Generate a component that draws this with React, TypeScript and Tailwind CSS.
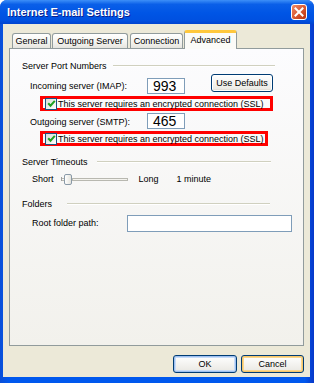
import React from "react";

const tabs = [
  { label: "General", width: "w-[39px]", gap: "ml-0" },
  { label: "Outgoing Server", width: "w-[76px]", gap: "ml-[1px]" },
  { label: "Connection", width: "w-[53px]", gap: "ml-[2px]" },
];

const Checkbox = () => (
  <div className="w-[12px] h-[12px] shrink-0 border border-[#1c5180] bg-[linear-gradient(135deg,#dcdcd7,#ffffff)] flex items-center justify-center">
    <svg width="9" height="9" viewBox="0 0 9 9">
      <path d="M1.2 4.3 L3.5 6.7 L7.8 1.8" stroke="#21a121" strokeWidth="2" fill="none" />
    </svg>
  </div>
);

// etched line that follows a group title
const GroupHeader = ({ title, gap, right }: { title: string; gap: string; right: string }) => (
  <div className="flex items-center h-[12px] leading-[12px]">
    <span className="text-black">{title}</span>
    <div className={`flex-1 ${gap} ${right} h-[2px] border-t border-[#d0d0bf] border-b border-b-white`} />
  </div>
);

const SslBox = ({ width }: { width: string }) => (
  <div className={`ml-[18px] ${width} h-[15px] border-[3px] border-[#ff0000] flex items-center`}>
    <div className="ml-[2px]">
      <Checkbox />
    </div>
    <span className="ml-[1px] leading-[10px] whitespace-nowrap">
      This server requires an encrypted connection (SSL)
    </span>
  </div>
);

const PortInput = ({ value }: { value: string }) => (
  <div className="w-[38px] h-[16px] border border-[#7f9db9] bg-white pl-[5px] text-[14px] leading-[15px] text-black">
    {value}
  </div>
);

const XpButton = ({ label, width, ring }: { label: string; width: string; ring: string }) => (
  <div
    className={`${width} h-[18px] rounded-[3px] border border-[#003c74] bg-[linear-gradient(#ffffff,#ecebe6_85%,#d6d0c5)] flex items-center justify-center leading-[10px] text-black ${ring}`}
  >
    {label}
  </div>
);

export default function App() {
  return (
    <div className="w-[314px] h-[383px] flex flex-col rounded-t-[7px] overflow-hidden bg-[linear-gradient(90deg,#0a4fd8,#0058ee_3%,#0058ee_97%,#0838c8)] font-['Liberation_Sans',Arial,sans-serif] text-[9px] text-black">
      {/* title bar */}
      <div className="h-[24px] shrink-0 flex items-center justify-between pl-[7px] pr-[7px] bg-[linear-gradient(#3d8ff8,#0a5fe8_18%,#0055e5_55%,#0050e0_85%,#0043cf)]">
        <span className="text-white font-bold text-[11px] leading-[14px] [text-shadow:1px_1px_0_#0a1e8c]">
          Internet E-mail Settings
        </span>
        <div className="w-[16px] h-[16px] rounded-[3px] border border-white bg-[linear-gradient(135deg,#f08b68,#d8562f_55%,#b8330f)] flex items-center justify-center">
          <svg width="10" height="10" viewBox="0 0 10 10">
            <path d="M1.5 1.5 L8.5 8.5 M8.5 1.5 L1.5 8.5" stroke="#ffffff" strokeWidth="2" strokeLinecap="square" />
          </svg>
        </div>
      </div>

      {/* client area */}
      <div className="flex-1 ml-[3px] mr-[4px] mb-[6px] bg-[#ece9d8] flex flex-col">
        <div className="mx-[6px] pt-[6px] flex flex-col">
          {/* tab strip */}
          <div className="h-[18px] pl-[3px] flex items-end">
            {tabs.map((t) => (
              <div
                key={t.label}
                className={`${t.width} ${t.gap} h-[15px] border border-b-0 border-[#919b9c] rounded-t-[3px] bg-[linear-gradient(#ffffff,#f3f3ef_60%,#e6e5df)] flex items-center justify-center leading-[10px] whitespace-nowrap`}
              >
                {t.label}
              </div>
            ))}
            <div className="ml-[1px] w-[53px] h-[19px] -mb-px relative z-10 border-x border-[#919b9c] border-t-[3px] border-t-[#ffc83c] rounded-t-[3px] bg-[#fbfbf8] flex items-center justify-center pb-[3px] leading-[10px]">
              Advanced
            </div>
          </div>

          {/* tab panel */}
          <div className="h-[298px] border border-[#919b9c] bg-[linear-gradient(#fcfcfe,#f2f1ec)] pl-[12px] pr-[28px] pt-[11px] flex flex-col">
            <GroupHeader title="Server Port Numbers" gap="ml-[6px]" right="mr-0" />

            <div className="mt-[2px] h-[20px] flex items-start">
              <span className="ml-[8px] mt-[6px] w-[117px] shrink-0 leading-[12px]">Incoming server (IMAP):</span>
              <div className="mt-[4px]">
                <PortInput value="993" />
              </div>
              <div className="ml-[26px]">
                <XpButton label="Use Defaults" width="w-[62px]" ring="shadow-[inset_0_0_0_1px_#fff]" />
              </div>
            </div>

            <div className="mt-[2px]">
              <SslBox width="w-[233px]" />
            </div>

            <div className="mt-[2px] h-[16px] flex items-start">
              <span className="ml-[8px] mt-[3px] w-[117px] shrink-0 leading-[12px]">Outgoing server (SMTP):</span>
              <PortInput value="465" />
            </div>

            <div className="mt-[2px]">
              <SslBox width="w-[228px]" />
            </div>

            <div className="mt-[10px]">
              <GroupHeader title="Server Timeouts" gap="ml-[9px]" right="mr-[4px]" />
            </div>

            <div className="mt-[5px] h-[12px] flex items-center leading-[12px]">
              <span className="ml-[10px]">Short</span>
              <div className="ml-[7px] w-[67px] h-[12px] flex items-center">
                <div className="w-px h-[4px] bg-[#a0a0a0]" />
                <div className="w-[2px] h-[3px] border-y border-[#b8b8b0]" />
                <div className="w-[8px] h-[11px] rounded-[2px] border border-[#8a9aa8] bg-[linear-gradient(90deg,#ffffff,#e4e3dc)]" />
                <div className="flex-1 h-[3px] border border-[#b8b8b0] bg-[#f4f3ee]" />
              </div>
              <span className="ml-[11px]">Long</span>
              <span className="ml-[18px]">1 minute</span>
            </div>

            <div className="mt-[13px]">
              <GroupHeader title="Folders" gap="ml-[15px]" right="mr-[5px]" />
            </div>

            <div className="mt-[5px] h-[17px] flex items-start">
              <span className="ml-[10px] mt-[2px] w-[95px] shrink-0 leading-[12px]">Root folder path:</span>
              <div className="w-[165px] h-[17px] shrink-0 border border-[#7f9db9] bg-white" />
            </div>
          </div>

          {/* dialog buttons */}
          <div className="mt-[9px] flex justify-end">
            <XpButton label="OK" width="w-[64px]" ring="shadow-[inset_0_0_0_1px_#9ec0f0,inset_0_0_0_2px_#c8dcf8]" />
            <div className="ml-[4px]">
              <XpButton label="Cancel" width="w-[63px]" ring="shadow-[inset_0_0_0_1px_#f5c66b,inset_0_0_0_2px_#fbd88f]" />
            </div>
          </div>
        </div>
      </div>
    </div>
  );
}
